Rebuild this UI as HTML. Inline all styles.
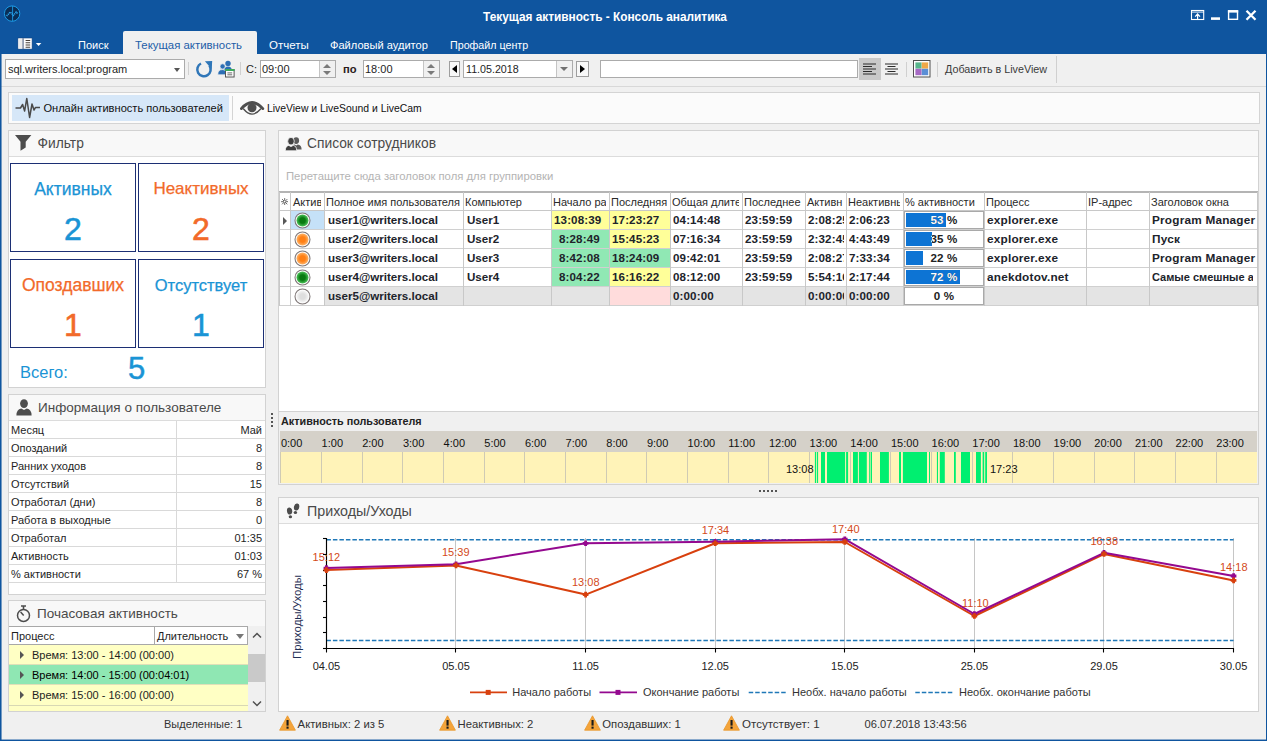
<!DOCTYPE html>
<html lang="ru">
<head>
<meta charset="utf-8">
<title>Текущая активность - Консоль аналитика</title>
<style>
*{box-sizing:border-box;margin:0;padding:0}
html,body{width:1267px;height:741px;overflow:hidden}
body{font-family:"Liberation Sans",sans-serif;font-size:12px;color:#1e1e1e;background:#f0f0f0;position:relative}
.a{position:absolute;white-space:nowrap}
.t{position:absolute;white-space:nowrap;line-height:14px;height:14px}
#win{position:absolute;left:0;top:0;width:1267px;height:741px;background:#f0f0f0;overflow:hidden}
#title{left:0;top:0;width:1267px;height:54px;background:#0f559f}
.tab{color:#fff;font-size:11.4px}
.inp{background:#fff;border:1px solid #ababab}
.panel{background:#fff;border:1px solid #d2d2d2}
.phead{position:absolute;left:0;top:0;right:0;height:26px;background:#f8f8f8;border-bottom:1px solid #dcdcdc}
.ptitle{position:absolute;top:5px;font-size:13.5px;color:#3c3c3c;line-height:16px;white-space:nowrap}
.fb{width:126px;height:89px;border:1px solid #1c2f74;background:#fff}
.fl{width:126px;text-align:center;font-size:17.5px;line-height:22px;-webkit-text-stroke:.25px currentColor}
.fn{width:126px;text-align:center;font-size:32px;line-height:36px;-webkit-text-stroke:.55px currentColor}
.tri{width:0;height:0;border:4px solid transparent;border-left:4.5px solid #555;border-right:0}
.gh{height:18px;line-height:18px;font-size:11px;padding-left:2px;overflow:hidden;white-space:nowrap;color:#2a2a2a}
.gc{height:18px;line-height:18px;font-size:11.6px;font-weight:bold;overflow:hidden;white-space:nowrap;color:#20232b;letter-spacing:.12px}
.gw{font-size:11.6px;letter-spacing:0}
.gw2{font-size:11.8px;letter-spacing:.2px}
.sep{position:absolute;width:1px;background:#d0d0d0}
</style>
</head>
<body>
<div id="win">

<!-- ===== TITLE BAR ===== -->
<div class="a" id="title">
  <svg class="a" style="left:3px;top:4px" width="19" height="19" viewBox="0 0 19 19">
    <circle cx="9.1" cy="9.6" r="7.7" fill="#0a2d55" stroke="#1c9be6" stroke-width="1"/>
    <path d="M9.6 2 V17.2" stroke="#1c9be6" stroke-width="0.9"/>
    <path d="M3.6 12 L7.4 8 L10.4 11.4 L13.2 8 L15 10" fill="none" stroke="#2aa4ee" stroke-width="1.5" stroke-dasharray="1.2 0.7"/>
  </svg>
  <div class="t" style="left:0;width:1210px;top:9.5px;text-align:center;color:#fff;font-weight:bold;font-size:11.85px">Текущая активность - Консоль аналитика</div>
  <!-- window controls -->
  <svg class="a" style="left:1190px;top:9px" width="70" height="13" viewBox="0 0 70 13">
    <rect x="1.5" y="1.5" width="12.2" height="9" fill="none" stroke="#fff" stroke-width="1.1"/>
    <path d="M1.5 3.1 H13.7" stroke="#fff" stroke-width="0.9"/>
    <path d="M7.6 10 V5.4 M5.2 7.6 L7.6 5 L10 7.6" stroke="#fff" stroke-width="1.2" fill="none"/>
    <rect x="21" y="8.3" width="9" height="2.6" fill="#fff"/>
    <rect x="38.6" y="2" width="8.9" height="8.3" fill="none" stroke="#fff" stroke-width="1.4"/>
    <rect x="37.9" y="1.1" width="10.3" height="2.5" fill="#fff"/>
    <path d="M56.5 1.7 L65.5 10.7 M65.5 1.7 L56.5 10.7" stroke="#fff" stroke-width="2.3"/>
  </svg>
  <!-- tab row -->
  <svg class="a" style="left:17px;top:37px" width="26" height="13" viewBox="0 0 26 13">
    <rect x="0.9" y="1" width="14.2" height="11.1" fill="#fdfdfd" stroke="#0c3f7e" stroke-width="0.6"/>
    <rect x="1.6" y="1.8" width="3.8" height="9.6" fill="#ececec"/>
    <rect x="5.6" y="1.3" width="0.9" height="10.6" fill="#2a3f66"/>
    <path d="M8.6 3.5 H13.2 M8.6 5.8 H13.2 M8.6 8 H13.2 M8.6 10.2 H13.2" stroke="#4a4038" stroke-width="1.1"/>
    <path d="M18.8 6 H24.4 L21.6 9 Z" fill="#fff"/>
  </svg>
  <div class="a" style="left:123px;top:31px;width:134px;height:24px;background:#f0f0f0;border-radius:2px 2px 0 0"></div>
  <div class="t tab" style="left:78px;top:38px;font-size:11px">Поиск</div>
  <div class="t tab" style="left:135px;top:38px;color:#1d5ea8">Текущая активность</div>
  <div class="t tab" style="left:269px;top:38px;font-size:11.5px">Отчеты</div>
  <div class="t tab" style="left:330px;top:38px;font-size:11.1px">Файловый аудитор</div>
  <div class="t tab" style="left:450px;top:38px;font-size:10.7px">Профайл центр</div>
</div>

<!-- ===== TOOLBAR 1 ===== -->
<div class="a" id="tb1" style="left:0;top:54px;width:1267px;height:33px;background:#f0f0f0;border-bottom:1px solid #d8d8d8">
  <div class="a inp" style="left:5px;top:5px;width:180px;height:20px"></div>
  <div class="t" style="left:8px;top:8px;font-size:11px">sql.writers.local:program</div>
  <div class="a" style="left:174px;top:14px;border:3.5px solid transparent;border-top:4px solid #555;width:0;height:0"></div>
  <div class="sep" style="left:188px;top:8px;height:13px"></div>
  <!-- refresh -->
  <svg class="a" style="left:195px;top:5px" width="18" height="20" viewBox="0 0 18 20">
    <path d="M6.0 4.5 A6.7 6.7 0 1 0 14.4 6.6" fill="none" stroke="#2f76b8" stroke-width="2.5"/>
    <path d="M9.9 2.3 L17.2 1.9 L16.8 9.2 L13.6 6.4 Z" fill="#2f76b8"/>
  </svg>
  <!-- users icon -->
  <svg class="a" style="left:217px;top:6px" width="19" height="19" viewBox="0 0 19 19">
    <circle cx="11" cy="3.4" r="2.7" fill="#2c6fb5"/>
    <path d="M7.2 11 Q7.2 6.4 11 6.4 Q14.6 6.4 14.8 10 L14.8 11 Z" fill="#2c6fb5"/>
    <circle cx="5.6" cy="6.4" r="2.6" fill="#2c6fb5" stroke="#f0f0f0" stroke-width="0.7"/>
    <path d="M0.8 14.8 Q0.8 9.6 5.4 9.6 Q9.4 9.6 9.4 14.8 Z" fill="#2c6fb5" stroke="#f0f0f0" stroke-width="0.7"/>
    <rect x="8.5" y="9.6" width="8.6" height="7.4" fill="#fff" stroke="#555" stroke-width="1"/>
    <rect x="8" y="9" width="9.6" height="2" fill="#3daa5c"/>
    <path d="M10.4 12.9 H15.2 M10.4 14.8 H15.2" stroke="#444" stroke-width="0.8"/>
  </svg>
  <div class="sep" style="left:240px;top:8px;height:13px"></div>
  <div class="t" style="left:246px;top:8px;font-size:11px">С:</div>
  <div class="a inp" style="left:260px;top:6px;width:76px;height:18px"></div>
  <div class="t" style="left:262px;top:8px;font-size:11px">09:00</div>
  <div class="a" style="left:319px;top:7px;width:16px;height:16px;background:#f0f0f0;border-left:1px solid #c4c4c4"></div>
  <div class="a" style="left:323px;top:9.5px;border:4px solid transparent;border-bottom:4px solid #7a7a7a;border-top:0;width:0;height:0"></div>
  <div class="a" style="left:323px;top:16.5px;border:4px solid transparent;border-top:4px solid #7a7a7a;border-bottom:0;width:0;height:0"></div>
  <div class="t" style="left:343px;top:8px;font-size:11.2px;font-weight:bold;color:#2a1a1a">по</div>
  <div class="a inp" style="left:363px;top:6px;width:77px;height:18px"></div>
  <div class="t" style="left:365px;top:8px;font-size:11px">18:00</div>
  <div class="a" style="left:423px;top:7px;width:16px;height:16px;background:#f0f0f0;border-left:1px solid #c4c4c4"></div>
  <div class="a" style="left:427px;top:9.5px;border:4px solid transparent;border-bottom:4px solid #7a7a7a;border-top:0;width:0;height:0"></div>
  <div class="a" style="left:427px;top:16.5px;border:4px solid transparent;border-top:4px solid #7a7a7a;border-bottom:0;width:0;height:0"></div>
  <!-- date nav -->
  <div class="a" style="left:449px;top:7px;width:11px;height:16px;background:#f8f8f8;border:1px solid #9e9e9e"></div>
  <div class="a" style="left:452px;top:11px;border:4px solid transparent;border-right:5px solid #000;border-left:0;width:0;height:0"></div>
  <div class="a inp" style="left:463px;top:6px;width:110px;height:18px"></div>
  <div class="t" style="left:466px;top:8px;font-size:10.7px">11.05.2018</div>
  <div class="a" style="left:556px;top:7px;width:16px;height:16px;background:#f0f0f0;border-left:1px solid #c4c4c4"></div>
  <div class="a" style="left:560px;top:13px;border:4px solid transparent;border-top:4px solid #707070;border-bottom:0;width:0;height:0"></div>
  <div class="a" style="left:576px;top:7px;width:13px;height:16px;background:#f8f8f8;border:1px solid #9e9e9e"></div>
  <div class="a" style="left:580px;top:11px;border:4px solid transparent;border-left:5px solid #000;border-right:0;width:0;height:0"></div>
  <div class="a inp" style="left:600px;top:6px;width:258px;height:18px"></div>
  <!-- align buttons -->
  <div class="a" style="left:859px;top:4px;width:22px;height:22px;background:#c9c9c9"></div>
  <svg class="a" style="left:863px;top:9px" width="14" height="12" viewBox="0 0 14 12"><path d="M0 1 H13 M0 3.5 H9 M0 6 H13 M0 8.5 H9 M0 11 H13" stroke="#2b2b2b" stroke-width="1.2"/></svg>
  <svg class="a" style="left:885px;top:9px" width="14" height="12" viewBox="0 0 14 12"><path d="M0 1 H13 M2.5 3.5 H10.5 M0 6 H13 M2.5 8.5 H10.5 M0 11 H13" stroke="#2b2b2b" stroke-width="1.2"/></svg>
  <div class="sep" style="left:906px;top:8px;height:15px"></div>
  <svg class="a" style="left:913px;top:6px" width="18" height="18" viewBox="0 0 18 18">
    <rect x="0.5" y="0.5" width="16.5" height="16.5" fill="#fff" stroke="#4f4f4f" stroke-width="1"/>
    <rect x="2.4" y="2.4" width="6.2" height="6.2" fill="#58b58c"/><rect x="8.8" y="2.4" width="6.4" height="6.2" fill="#f0a848"/>
    <rect x="2.4" y="8.8" width="6.2" height="6.4" fill="#a669c4"/><rect x="8.8" y="8.8" width="6.4" height="6.4" fill="#5b8fd6"/>
  </svg>
  <div class="sep" style="left:937px;top:8px;height:15px"></div>
  <div class="t" style="left:945px;top:8px;font-size:10.75px;color:#3a3a3a">Добавить в LiveView</div>
  <div class="sep" style="left:1056px;top:2px;height:27px"></div>
</div>

<!-- ===== TOOLBAR 2 ===== -->
<div class="a" id="tb2" style="left:8px;top:92px;width:1252px;height:32px;background:#fbfbfb;border:1px solid #d4d4d4">
  <div class="a" style="left:3px;top:2px;width:217px;height:26px;background:#d6e7f8"></div>
  <svg class="a" style="left:6px;top:4px" width="26" height="22" viewBox="0 0 26 22">
    <path d="M0.5 11 H5.5 L7.6 7.5 L9.6 14 L11.8 1.5 L14.6 20.5 L17 7 L19 13 L20.4 10.6 H25" fill="none" stroke="#4a4a4a" stroke-width="1.5" stroke-linejoin="round"/>
  </svg>
  <div class="t" style="left:34.4px;top:8px;font-size:11.1px;color:#111">Онлайн активность пользователей</div>
  <div class="sep" style="left:223px;top:3px;height:24px;background:#d4d4d4"></div>
  <svg class="a" style="left:231px;top:8px" width="25" height="15" viewBox="0 0 25 15">
    <path d="M1.4 7.6 Q12 -4.6 22.8 7.6" fill="none" stroke="#4f4f4f" stroke-width="2.8" stroke-linecap="round"/>
    <path d="M3.6 8 Q12 18.2 20.6 8" fill="none" stroke="#4f4f4f" stroke-width="1.4" stroke-linecap="round"/>
    <circle cx="12" cy="6.8" r="4.5" fill="#4f4f4f"/>
  </svg>
  <div class="t" style="left:258px;top:8.5px;font-size:10.4px;color:#111">LiveView и LiveSound и LiveCam</div>
</div>

<!-- ===== FILTER PANEL ===== -->
<div class="a panel" id="pfilter" style="left:8px;top:130px;width:258px;height:258px;background:#fff">
  <div class="phead"></div>
  <svg class="a" style="left:6px;top:4px" width="17" height="16" viewBox="0 0 17 16">
    <path d="M0 0 H16.4 L10.7 6.8 V12.4 L5.5 15.8 V6.8 Z" fill="#4d4d4d"/>
  </svg>
  <div class="ptitle" style="left:28.5px;font-size:13.8px;color:#4a4a4a">Фильтр</div>
  <div class="a fb" style="left:1px;top:32px"></div>
  <div class="a fb" style="left:129px;top:32px"></div>
  <div class="a fb" style="left:1px;top:128px"></div>
  <div class="a fb" style="left:129px;top:128px"></div>
  <div class="a fl" style="left:1px;top:47px;color:#1a94d5">Активных</div>
  <div class="a fn" style="left:1px;top:80px;color:#1a94d5">2</div>
  <div class="a fl" style="left:129px;top:47px;color:#f26a2a;font-size:17px">Неактивных</div>
  <div class="a fn" style="left:129px;top:80px;color:#f26a2a">2</div>
  <div class="a fl" style="left:1px;top:143px;color:#f26a2a">Опоздавших</div>
  <div class="a fn" style="left:1px;top:176px;color:#f26a2a">1</div>
  <div class="a fl" style="left:129px;top:143px;color:#1a94d5;font-size:16.5px">Отсутствует</div>
  <div class="a fn" style="left:129px;top:176px;color:#1a94d5">1</div>
  <div class="a" style="left:11px;top:231px;font-size:16.5px;line-height:20px;color:#1a94d5">Всего:</div>
  <div class="a" style="left:119px;top:220px;font-size:31px;line-height:36px;color:#1a94d5;-webkit-text-stroke:.5px currentColor">5</div>
</div>

<!-- ===== USER INFO PANEL ===== -->
<div class="a panel" id="pinfo" style="left:8px;top:394px;width:258px;height:201px;background:#fff">
  <div class="phead"></div>
  <svg class="a" style="left:7px;top:4px" width="16" height="17" viewBox="0 0 16 17">
    <ellipse cx="8" cy="4.6" rx="3.9" ry="4.4" fill="#4d4d4d"/>
    <path d="M0.4 16.5 Q0.4 10.6 5.2 9.6 L8 11 L10.8 9.6 Q15.6 10.6 15.6 16.5 Z" fill="#4d4d4d"/>
  </svg>
  <div class="ptitle" style="left:29px;font-size:13.5px;color:#4a4a4a">Информация о пользователе</div>
  <div class="a" style="left:167px;top:26px;width:1px;height:162px;background:#d9d9d9"></div>
  <div class="a" style="left:0;top:26px;width:256px;height:18px;border-bottom:1px solid #d9d9d9"></div>
  <div class="t" style="left:2px;top:28px;font-size:11px">Месяц</div>
  <div class="t" style="right:3px;top:28px;font-size:11px">Май</div>
  <div class="a" style="left:0;top:44px;width:256px;height:18px;border-bottom:1px solid #d9d9d9"></div>
  <div class="t" style="left:2px;top:46px;font-size:11px">Опозданий</div>
  <div class="t" style="right:3px;top:46px;font-size:11px">8</div>
  <div class="a" style="left:0;top:62px;width:256px;height:18px;border-bottom:1px solid #d9d9d9"></div>
  <div class="t" style="left:2px;top:64px;font-size:11px">Ранних уходов</div>
  <div class="t" style="right:3px;top:64px;font-size:11px">8</div>
  <div class="a" style="left:0;top:80px;width:256px;height:18px;border-bottom:1px solid #d9d9d9"></div>
  <div class="t" style="left:2px;top:82px;font-size:11px">Отсутствий</div>
  <div class="t" style="right:3px;top:82px;font-size:11px">15</div>
  <div class="a" style="left:0;top:98px;width:256px;height:18px;border-bottom:1px solid #d9d9d9"></div>
  <div class="t" style="left:2px;top:100px;font-size:11px">Отработал (дни)</div>
  <div class="t" style="right:3px;top:100px;font-size:11px">8</div>
  <div class="a" style="left:0;top:116px;width:256px;height:18px;border-bottom:1px solid #d9d9d9"></div>
  <div class="t" style="left:2px;top:118px;font-size:11px">Работа в выходные</div>
  <div class="t" style="right:3px;top:118px;font-size:11px">0</div>
  <div class="a" style="left:0;top:134px;width:256px;height:18px;border-bottom:1px solid #d9d9d9"></div>
  <div class="t" style="left:2px;top:136px;font-size:11px">Отработал</div>
  <div class="t" style="right:3px;top:136px;font-size:11px">01:35</div>
  <div class="a" style="left:0;top:152px;width:256px;height:18px;border-bottom:1px solid #d9d9d9"></div>
  <div class="t" style="left:2px;top:154px;font-size:11px">Активность</div>
  <div class="t" style="right:3px;top:154px;font-size:11px">01:03</div>
  <div class="a" style="left:0;top:170px;width:256px;height:18px;border-bottom:1px solid #d9d9d9"></div>
  <div class="t" style="left:2px;top:172px;font-size:11px">% активности</div>
  <div class="t" style="right:3px;top:172px;font-size:11px">67 %</div>
</div>

<!-- ===== HOURLY PANEL ===== -->
<div class="a panel" id="phour" style="left:8px;top:600px;width:258px;height:112px;background:#fff;overflow:hidden">
  <div class="phead" style="height:25px;border-bottom:0"></div>
  <svg class="a" style="left:7px;top:4px" width="15" height="18" viewBox="0 0 15 18">
    <circle cx="7.5" cy="10.4" r="6" fill="none" stroke="#4d4d4d" stroke-width="1.5"/>
    <path d="M5 1 H10 M7.5 1 V4" fill="none" stroke="#4d4d4d" stroke-width="1.6"/>
    <path d="M4.6 7 L7.7 10.6" fill="none" stroke="#4d4d4d" stroke-width="1.5"/>
  </svg>
  <div class="ptitle" style="left:28px;font-size:13.5px;color:#4a4a4a">Почасовая активность</div>
  <div class="a" style="left:0;top:25px;width:239px;height:19px;background:#fff;border:1px solid #a8a8a8;border-left:0"></div>
  <div class="a" style="left:145px;top:26px;width:1px;height:17px;background:#a8a8a8"></div>
  <div class="t" style="left:2px;top:28px;font-size:11px">Процесс</div>
  <div class="t" style="left:148px;top:28px;font-size:11px">Длительность</div>
  <div class="a" style="left:227px;top:33px;border:4.5px solid transparent;border-top:5px solid #777;border-bottom:0;width:0;height:0"></div>
  <div class="a" style="left:0;top:44px;width:239px;height:20px;background:#ffffc4;border-bottom:1px solid #e0e0b8"></div>
  <div class="a" style="left:0;top:64px;width:239px;height:20px;background:#8fe7b3;border-bottom:1px solid #e0e0b8"></div>
  <div class="a" style="left:0;top:84px;width:239px;height:21px;background:#ffffc4;border-bottom:1px solid #d8d8b4"></div>
  <div class="a" style="left:0;top:105px;width:239px;height:8px;background:#ffffc4"></div>
  <div class="a tri" style="left:11px;top:50px"></div>
  <div class="a tri" style="left:11px;top:70px"></div>
  <div class="a tri" style="left:11px;top:90px"></div>
  <div class="t" style="left:23px;top:47px;font-size:11px">Время: 13:00 - 14:00 (00:00)</div>
  <div class="t" style="left:23px;top:67px;font-size:11px;color:#000">Время: 14:00 - 15:00 (00:04:01)</div>
  <div class="t" style="left:23px;top:87px;font-size:11px">Время: 15:00 - 16:00 (00:00)</div>
  <div class="t" style="left:23px;top:107px;font-size:11px">Время: 16:00 - 17:00 (00:00)</div>
  <div class="a" style="left:239px;top:25px;width:18px;height:86px;background:#f0f0f0"></div>
  <div class="a" style="left:239px;top:53px;width:18px;height:28px;background:#c9c9c9"></div>
  <svg class="a" style="left:243px;top:31px" width="10" height="7" viewBox="0 0 10 7"><path d="M1 5.5 L5 1.5 L9 5.5" fill="none" stroke="#505050" stroke-width="1.5"/></svg>
  <svg class="a" style="left:243px;top:99px" width="10" height="7" viewBox="0 0 10 7"><path d="M1 1.5 L5 5.5 L9 1.5" fill="none" stroke="#505050" stroke-width="1.5"/></svg>
</div>

<!-- ===== EMPLOYEE LIST PANEL ===== -->
<div class="a panel" id="pemp" style="left:278px;top:130px;width:981px;height:282px;background:#fff">
  <div class="phead"></div>
  <svg class="a" style="left:6px;top:6px" width="17" height="14" viewBox="0 0 17 14">
    <ellipse cx="11.2" cy="3.6" rx="2.9" ry="3.4" fill="#5a5a5a"/>
    <path d="M6.6 12.6 Q6.6 8.2 9.6 7.6 L11.2 8.6 L12.8 7.6 Q16.6 8.2 16.6 12.6 Z" fill="#5a5a5a"/>
    <ellipse cx="6" cy="4.2" rx="3.3" ry="3.8" fill="#3f3f3f" stroke="#f8f8f8" stroke-width="0.8"/>
    <path d="M0.3 13.8 Q0.3 9 3.8 8.4 L6 9.6 L8.2 8.4 Q11.7 9 11.7 13.8 Z" fill="#3f3f3f" stroke="#f8f8f8" stroke-width="0.8"/>
  </svg>
  <div class="ptitle" style="left:28px;font-size:13.8px;color:#4a4a4a">Список сотрудников</div>
  <div class="t" style="left:7px;top:38px;font-size:11.3px;color:#b4b4b4">Перетащите сюда заголовок поля для группировки</div>
  <div class="a" style="left:0;top:60px;width:979px;height:2px;background:#b4b4b4"></div>
  <div class="a" style="left:0;top:62px;width:979px;height:18px;background:#fff;border-bottom:1px solid #c8c8c8"></div>
  <div class="a gh" style="left:0px;top:62px;width:8px"></div>
  <div class="a gh" style="left:11px;top:62px;width:31px;padding-left:3px">Актив</div>
  <div class="a gh" style="left:45px;top:62px;width:136px">Полное имя пользователя</div>
  <div class="a gh" style="left:184px;top:62px;width:85px">Компьютер</div>
  <div class="a gh" style="left:272px;top:62px;width:55px">Начало раб</div>
  <div class="a gh" style="left:330px;top:62px;width:58px">Последняя</div>
  <div class="a gh" style="left:391px;top:62px;width:69px">Общая длите</div>
  <div class="a gh" style="left:463px;top:62px;width:60px">Последнее а</div>
  <div class="a gh" style="left:526px;top:62px;width:38px">Активн</div>
  <div class="a gh" style="left:567px;top:62px;width:54px">Неактивнь</div>
  <div class="a gh" style="left:624px;top:62px;width:78px">% активности</div>
  <div class="a gh" style="left:705px;top:62px;width:99px">Процесс</div>
  <div class="a gh" style="left:807px;top:62px;width:60px">IP-адрес</div>
  <div class="a gh" style="left:870px;top:62px;width:105px">Заголовок окна</div>
  <svg class="a" style="left:2px;top:67px" width="7.4" height="7.4" viewBox="0 0 9 9"><g stroke="#3a3a3a" stroke-width="0.95" stroke-linecap="round"><path d="M4.5 0.6 V8.4 M0.6 4.5 H8.4 M1.7 1.7 L7.3 7.3 M7.3 1.7 L1.7 7.3"/></g><circle cx="4.5" cy="4.5" r="1" fill="#fff"/></svg>
  <div class="a" style="left:11px;top:80px;width:35px;height:18px;background:#c5e1f8"></div>
  <div class="a tri" style="left:4px;top:86px;border-left-color:#585858"></div>
  <div class="a" style="left:273px;top:80px;width:57px;height:18px;background:#ffff99"></div>
  <div class="a" style="left:331px;top:80px;width:60px;height:18px;background:#ffff99"></div>
  <div class="a" style="left:0;top:98px;width:979px;height:1px;background:#d0d0d0"></div>
  <svg class="a" style="left:14.5px;top:80.5px" width="17" height="17" viewBox="0 0 17 17"><defs><radialGradient id="g0" cx="0.5" cy="0.5" r="0.5"><stop offset="0.45" stop-color="#087a10"/><stop offset="1" stop-color="#4cc45a"/></radialGradient></defs><circle cx="8.5" cy="8.5" r="7.5" fill="#fcfcfc" stroke="#7e7676" stroke-width="1.05"/><circle cx="8.5" cy="8.5" r="6" fill="url(#g0)"/></svg>
  <div class="a gc gw" style="left:49px;top:80px;width:133px">user1@writers.local</div>
  <div class="a gc gw" style="left:188px;top:80px;width:82px">User1</div>
  <div class="a gc" style="left:275px;top:80px;width:53px">13:08:39</div>
  <div class="a gc" style="left:333px;top:80px;width:56px">17:23:27</div>
  <div class="a gc" style="left:394px;top:80px;width:67px">04:14:48</div>
  <div class="a gc" style="left:466px;top:80px;width:58px">23:59:59</div>
  <div class="a gc" style="left:529px;top:80px;width:36px">2:08:25</div>
  <div class="a gc" style="left:570px;top:80px;width:52px">2:06:23</div>
  <div class="a" style="left:625px;top:80px;width:80px;height:18px;background:#fff;border:1px solid #a9a9a9"></div>
  <div class="a" style="left:627px;top:82px;width:40px;height:14px;background:#0d74d4"></div>
  <div class="a gc" style="left:625px;top:80px;width:80px;text-align:center;color:#222">53 %</div>
  <div class="a" style="left:627px;top:80px;width:40px;height:18px;overflow:hidden"><div class="a gc" style="left:-2px;top:0;width:80px;text-align:center;color:#fff">53 %</div></div>
  <div class="a gc gw2" style="left:708px;top:80px;width:97px">explorer.exe</div>
  <div class="a gc gw2" style="left:873px;top:80px;width:103px;width:104px">Program Manager</div>
  <div class="a" style="left:273px;top:99px;width:57px;height:18px;background:#90e8b4"></div>
  <div class="a" style="left:331px;top:99px;width:60px;height:18px;background:#ffff99"></div>
  <div class="a" style="left:0;top:117px;width:979px;height:1px;background:#d0d0d0"></div>
  <svg class="a" style="left:14.5px;top:99.5px" width="17" height="17" viewBox="0 0 17 17"><defs><radialGradient id="g1" cx="0.5" cy="0.5" r="0.5"><stop offset="0.45" stop-color="#ff7f14"/><stop offset="1" stop-color="#ffb468"/></radialGradient></defs><circle cx="8.5" cy="8.5" r="7.5" fill="#fcfcfc" stroke="#7e7676" stroke-width="1.05"/><circle cx="8.5" cy="8.5" r="6" fill="url(#g1)"/></svg>
  <div class="a gc gw" style="left:49px;top:99px;width:133px">user2@writers.local</div>
  <div class="a gc gw" style="left:188px;top:99px;width:82px">User2</div>
  <div class="a gc" style="left:280px;top:99px;width:48px">8:28:49</div>
  <div class="a gc" style="left:333px;top:99px;width:56px">15:45:23</div>
  <div class="a gc" style="left:394px;top:99px;width:67px">07:16:34</div>
  <div class="a gc" style="left:466px;top:99px;width:58px">23:59:59</div>
  <div class="a gc" style="left:529px;top:99px;width:36px">2:32:45</div>
  <div class="a gc" style="left:570px;top:99px;width:52px">4:43:49</div>
  <div class="a" style="left:625px;top:99px;width:80px;height:18px;background:#fff;border:1px solid #a9a9a9"></div>
  <div class="a" style="left:627px;top:101px;width:26px;height:14px;background:#0d74d4"></div>
  <div class="a gc" style="left:625px;top:99px;width:80px;text-align:center;color:#222">35 %</div>
  <div class="a" style="left:627px;top:99px;width:26px;height:18px;overflow:hidden"><div class="a gc" style="left:-2px;top:0;width:80px;text-align:center;color:#fff">35 %</div></div>
  <div class="a gc gw2" style="left:708px;top:99px;width:97px">explorer.exe</div>
  <div class="a gc gw2" style="left:873px;top:99px;width:103px;width:104px">Пуск</div>
  <div class="a" style="left:273px;top:118px;width:57px;height:18px;background:#90e8b4"></div>
  <div class="a" style="left:331px;top:118px;width:60px;height:18px;background:#90e8b4"></div>
  <div class="a" style="left:0;top:136px;width:979px;height:1px;background:#d0d0d0"></div>
  <svg class="a" style="left:14.5px;top:118.5px" width="17" height="17" viewBox="0 0 17 17"><defs><radialGradient id="g2" cx="0.5" cy="0.5" r="0.5"><stop offset="0.45" stop-color="#ff7f14"/><stop offset="1" stop-color="#ffb468"/></radialGradient></defs><circle cx="8.5" cy="8.5" r="7.5" fill="#fcfcfc" stroke="#7e7676" stroke-width="1.05"/><circle cx="8.5" cy="8.5" r="6" fill="url(#g2)"/></svg>
  <div class="a gc gw" style="left:49px;top:118px;width:133px">user3@writers.local</div>
  <div class="a gc gw" style="left:188px;top:118px;width:82px">User3</div>
  <div class="a gc" style="left:280px;top:118px;width:48px">8:42:08</div>
  <div class="a gc" style="left:333px;top:118px;width:56px">18:24:09</div>
  <div class="a gc" style="left:394px;top:118px;width:67px">09:42:01</div>
  <div class="a gc" style="left:466px;top:118px;width:58px">23:59:59</div>
  <div class="a gc" style="left:529px;top:118px;width:36px">2:08:27</div>
  <div class="a gc" style="left:570px;top:118px;width:52px">7:33:34</div>
  <div class="a" style="left:625px;top:118px;width:80px;height:18px;background:#fff;border:1px solid #a9a9a9"></div>
  <div class="a" style="left:627px;top:120px;width:17px;height:14px;background:#0d74d4"></div>
  <div class="a gc" style="left:625px;top:118px;width:80px;text-align:center;color:#222">22 %</div>
  <div class="a" style="left:627px;top:118px;width:17px;height:18px;overflow:hidden"><div class="a gc" style="left:-2px;top:0;width:80px;text-align:center;color:#fff">22 %</div></div>
  <div class="a gc gw2" style="left:708px;top:118px;width:97px">explorer.exe</div>
  <div class="a gc gw2" style="left:873px;top:118px;width:103px;width:104px">Program Manager</div>
  <div class="a" style="left:273px;top:137px;width:57px;height:18px;background:#90e8b4"></div>
  <div class="a" style="left:331px;top:137px;width:60px;height:18px;background:#ffff99"></div>
  <div class="a" style="left:0;top:155px;width:979px;height:1px;background:#d0d0d0"></div>
  <svg class="a" style="left:14.5px;top:137.5px" width="17" height="17" viewBox="0 0 17 17"><defs><radialGradient id="g3" cx="0.5" cy="0.5" r="0.5"><stop offset="0.45" stop-color="#087a10"/><stop offset="1" stop-color="#4cc45a"/></radialGradient></defs><circle cx="8.5" cy="8.5" r="7.5" fill="#fcfcfc" stroke="#7e7676" stroke-width="1.05"/><circle cx="8.5" cy="8.5" r="6" fill="url(#g3)"/></svg>
  <div class="a gc gw" style="left:49px;top:137px;width:133px">user4@writers.local</div>
  <div class="a gc gw" style="left:188px;top:137px;width:82px">User4</div>
  <div class="a gc" style="left:280px;top:137px;width:48px">8:04:22</div>
  <div class="a gc" style="left:333px;top:137px;width:56px">16:16:22</div>
  <div class="a gc" style="left:394px;top:137px;width:67px">08:12:00</div>
  <div class="a gc" style="left:466px;top:137px;width:58px">23:59:59</div>
  <div class="a gc" style="left:529px;top:137px;width:36px">5:54:16</div>
  <div class="a gc" style="left:570px;top:137px;width:52px">2:17:44</div>
  <div class="a" style="left:625px;top:137px;width:80px;height:18px;background:#fff;border:1px solid #a9a9a9"></div>
  <div class="a" style="left:627px;top:139px;width:54px;height:14px;background:#0d74d4"></div>
  <div class="a gc" style="left:625px;top:137px;width:80px;text-align:center;color:#222">72 %</div>
  <div class="a" style="left:627px;top:137px;width:54px;height:18px;overflow:hidden"><div class="a gc" style="left:-2px;top:0;width:80px;text-align:center;color:#fff">72 %</div></div>
  <div class="a gc gw2" style="left:708px;top:137px;width:97px">anekdotov.net</div>
  <div class="a gc gw2" style="left:873px;top:137px;width:103px;width:101px;font-size:11px;letter-spacing:0">Самые смешные анекдоты</div>
  <div class="a" style="left:45px;top:156px;width:933px;height:19px;background:#e4e4e4"></div>
  <div class="a" style="left:331px;top:156px;width:60px;height:18px;background:#ffdcdc"></div>
  <div class="a" style="left:0;top:174px;width:979px;height:1px;background:#d0d0d0"></div>
  <svg class="a" style="left:14.5px;top:156.5px" width="17" height="17" viewBox="0 0 17 17"><defs><radialGradient id="g4" cx="0.5" cy="0.5" r="0.5"><stop offset="0.45" stop-color="#dedede"/><stop offset="1" stop-color="#f6f6f6"/></radialGradient></defs><circle cx="8.5" cy="8.5" r="7.5" fill="#fcfcfc" stroke="#7e7676" stroke-width="1.05"/><circle cx="8.5" cy="8.5" r="6" fill="url(#g4)"/></svg>
  <div class="a gc gw" style="left:49px;top:156px;width:133px">user5@writers.local</div>
  <div class="a gc" style="left:394px;top:156px;width:67px">0:00:00</div>
  <div class="a gc" style="left:529px;top:156px;width:36px">0:00:00</div>
  <div class="a gc" style="left:570px;top:156px;width:52px">0:00:00</div>
  <div class="a" style="left:625px;top:156px;width:80px;height:18px;background:#fff;border:1px solid #a9a9a9"></div>
  <div class="a gc" style="left:625px;top:156px;width:80px;text-align:center;color:#222">0 %</div>
  <div class="a" style="left:0px;top:61px;width:1px;height:114px;background:#c8c8c8"></div>
  <div class="a" style="left:11px;top:61px;width:1px;height:114px;background:#c8c8c8"></div>
  <div class="a" style="left:45px;top:61px;width:1px;height:114px;background:#c8c8c8"></div>
  <div class="a" style="left:184px;top:61px;width:1px;height:114px;background:#c8c8c8"></div>
  <div class="a" style="left:272px;top:61px;width:1px;height:114px;background:#c8c8c8"></div>
  <div class="a" style="left:330px;top:61px;width:1px;height:114px;background:#c8c8c8"></div>
  <div class="a" style="left:391px;top:61px;width:1px;height:114px;background:#c8c8c8"></div>
  <div class="a" style="left:463px;top:61px;width:1px;height:114px;background:#c8c8c8"></div>
  <div class="a" style="left:526px;top:61px;width:1px;height:114px;background:#c8c8c8"></div>
  <div class="a" style="left:567px;top:61px;width:1px;height:114px;background:#c8c8c8"></div>
  <div class="a" style="left:624px;top:61px;width:1px;height:114px;background:#c8c8c8"></div>
  <div class="a" style="left:705px;top:61px;width:1px;height:114px;background:#c8c8c8"></div>
  <div class="a" style="left:807px;top:61px;width:1px;height:114px;background:#c8c8c8"></div>
  <div class="a" style="left:870px;top:61px;width:1px;height:114px;background:#c8c8c8"></div>
  <div class="a" style="left:978px;top:61px;width:1px;height:114px;background:#c8c8c8"></div>
</div>


<!-- ===== ACTIVITY TIMELINE ===== -->
<div class="a" style="left:278px;top:411px;width:981px;height:74px;border:1px solid #d2d2d2;background:#f0f0f0"></div>
<div class="t" style="left:281px;top:414px;font-size:10.8px;font-weight:bold;color:#222">Активность пользователя</div>
<svg class="a" style="left:270px;top:412px" width="4" height="18" viewBox="0 0 4 18"><g fill="#555"><rect x="1" y="1" width="2" height="2"/><rect x="1" y="5" width="2" height="2"/><rect x="1" y="9" width="2" height="2"/><rect x="1" y="13" width="2" height="2"/></g></svg>
<div class="a" id="tl" style="left:280px;top:431px;width:977px;height:52px;background:#fff3b8;overflow:hidden">
  <div class="a" style="left:0;top:0;width:977px;height:21px;background:#d5d1c9"></div>
  <div class="a" style="left:0.3px;top:21px;width:1px;height:31px;background:#cfcab4"></div>
  <div class="t" style="left:0.9px;top:5px;font-size:11px;color:#111">0:00</div>
  <div class="a" style="left:41.0px;top:21px;width:1px;height:31px;background:#cfcab4"></div>
  <div class="t" style="left:41.6px;top:5px;font-size:11px;color:#111">1:00</div>
  <div class="a" style="left:81.6px;top:21px;width:1px;height:31px;background:#cfcab4"></div>
  <div class="t" style="left:82.2px;top:5px;font-size:11px;color:#111">2:00</div>
  <div class="a" style="left:122.3px;top:21px;width:1px;height:31px;background:#cfcab4"></div>
  <div class="t" style="left:122.9px;top:5px;font-size:11px;color:#111">3:00</div>
  <div class="a" style="left:163.0px;top:21px;width:1px;height:31px;background:#cfcab4"></div>
  <div class="t" style="left:163.6px;top:5px;font-size:11px;color:#111">4:00</div>
  <div class="a" style="left:203.7px;top:21px;width:1px;height:31px;background:#cfcab4"></div>
  <div class="t" style="left:204.3px;top:5px;font-size:11px;color:#111">5:00</div>
  <div class="a" style="left:244.3px;top:21px;width:1px;height:31px;background:#cfcab4"></div>
  <div class="t" style="left:244.9px;top:5px;font-size:11px;color:#111">6:00</div>
  <div class="a" style="left:285.0px;top:21px;width:1px;height:31px;background:#cfcab4"></div>
  <div class="t" style="left:285.6px;top:5px;font-size:11px;color:#111">7:00</div>
  <div class="a" style="left:325.7px;top:21px;width:1px;height:31px;background:#cfcab4"></div>
  <div class="t" style="left:326.3px;top:5px;font-size:11px;color:#111">8:00</div>
  <div class="a" style="left:366.3px;top:21px;width:1px;height:31px;background:#cfcab4"></div>
  <div class="t" style="left:366.9px;top:5px;font-size:11px;color:#111">9:00</div>
  <div class="a" style="left:407.0px;top:21px;width:1px;height:31px;background:#cfcab4"></div>
  <div class="t" style="left:407.6px;top:5px;font-size:11px;color:#111">10:00</div>
  <div class="a" style="left:447.7px;top:21px;width:1px;height:31px;background:#cfcab4"></div>
  <div class="t" style="left:448.3px;top:5px;font-size:11px;color:#111">11:00</div>
  <div class="a" style="left:488.3px;top:21px;width:1px;height:31px;background:#cfcab4"></div>
  <div class="t" style="left:488.9px;top:5px;font-size:11px;color:#111">12:00</div>
  <div class="a" style="left:529.0px;top:21px;width:1px;height:31px;background:#cfcab4"></div>
  <div class="t" style="left:529.6px;top:5px;font-size:11px;color:#111">13:00</div>
  <div class="a" style="left:569.7px;top:21px;width:1px;height:31px;background:#cfcab4"></div>
  <div class="t" style="left:570.3px;top:5px;font-size:11px;color:#111">14:00</div>
  <div class="a" style="left:610.4px;top:21px;width:1px;height:31px;background:#cfcab4"></div>
  <div class="t" style="left:611.0px;top:5px;font-size:11px;color:#111">15:00</div>
  <div class="a" style="left:651.0px;top:21px;width:1px;height:31px;background:#cfcab4"></div>
  <div class="t" style="left:651.6px;top:5px;font-size:11px;color:#111">16:00</div>
  <div class="a" style="left:691.7px;top:21px;width:1px;height:31px;background:#cfcab4"></div>
  <div class="t" style="left:692.3px;top:5px;font-size:11px;color:#111">17:00</div>
  <div class="a" style="left:732.4px;top:21px;width:1px;height:31px;background:#cfcab4"></div>
  <div class="t" style="left:733.0px;top:5px;font-size:11px;color:#111">18:00</div>
  <div class="a" style="left:773.0px;top:21px;width:1px;height:31px;background:#cfcab4"></div>
  <div class="t" style="left:773.6px;top:5px;font-size:11px;color:#111">19:00</div>
  <div class="a" style="left:813.7px;top:21px;width:1px;height:31px;background:#cfcab4"></div>
  <div class="t" style="left:814.3px;top:5px;font-size:11px;color:#111">20:00</div>
  <div class="a" style="left:854.4px;top:21px;width:1px;height:31px;background:#cfcab4"></div>
  <div class="t" style="left:855.0px;top:5px;font-size:11px;color:#111">21:00</div>
  <div class="a" style="left:895.0px;top:21px;width:1px;height:31px;background:#cfcab4"></div>
  <div class="t" style="left:895.6px;top:5px;font-size:11px;color:#111">22:00</div>
  <div class="a" style="left:935.7px;top:21px;width:1px;height:31px;background:#cfcab4"></div>
  <div class="t" style="left:936.3px;top:5px;font-size:11px;color:#111">23:00</div>
  <svg class="a" style="left:0;top:21px" width="977" height="32" viewBox="0 0 977 32" shape-rendering="auto"><g fill="#00ef70">
    <rect x="534.9" y="0" width="1.2" height="32"/>
    <rect x="536.9" y="0" width="1.2" height="32"/>
    <rect x="541.0" y="0" width="4.0" height="32"/>
    <rect x="547.0" y="0" width="18.1" height="32"/>
    <rect x="566.1" y="0" width="2.0" height="32"/>
    <rect x="573.0" y="0" width="4.9" height="32"/>
    <rect x="578.9" y="0" width="7.9" height="32"/>
    <rect x="589.2" y="0" width="1.2" height="32"/>
    <rect x="591.0" y="0" width="1.0" height="32"/>
    <rect x="600.0" y="0" width="8.9" height="32"/>
    <rect x="619.0" y="0" width="2.0" height="32"/>
    <rect x="622.9" y="0" width="24.1" height="32"/>
    <rect x="649.0" y="0" width="1.0" height="32"/>
    <rect x="656.9" y="0" width="1.1" height="32"/>
    <rect x="659.8" y="0" width="5.0" height="32"/>
    <rect x="674.0" y="0" width="1.8" height="32"/>
    <rect x="681.0" y="0" width="9.0" height="32"/>
    <rect x="696.0" y="0" width="4.9" height="32"/>
    <rect x="702.6" y="0" width="1.6" height="32"/>
    <rect x="705.2" y="0" width="1.8" height="32"/>
  </g></svg>
  <div class="t" style="left:506px;top:31px;font-size:11px;color:#111">13:08</div>
  <div class="t" style="left:710px;top:31px;font-size:11px;color:#111">17:23</div>
</div>
<svg class="a" style="left:758px;top:489px" width="20" height="4" viewBox="0 0 20 4"><g fill="#555"><rect x="1" y="1" width="2" height="2"/><rect x="5" y="1" width="2" height="2"/><rect x="9" y="1" width="2" height="2"/><rect x="13" y="1" width="2" height="2"/><rect x="17" y="1" width="2" height="2"/></g></svg>
<!-- ===== CHART PANEL ===== -->
<div class="a panel" id="pchart" style="left:278px;top:497px;width:981px;height:215px;background:#fff">
  <div class="phead"></div>
  <svg class="a" style="left:7px;top:5px" width="15" height="16" viewBox="0 0 15 16">
    <g fill="#4d4d4d"><ellipse cx="10.6" cy="4" rx="2.6" ry="3.6" transform="rotate(14 10.6 4)"/><ellipse cx="9.4" cy="9.6" rx="1.7" ry="1.5"/>
    <ellipse cx="3.6" cy="8" rx="2.6" ry="3.6" transform="rotate(-10 3.6 8)"/><ellipse cx="4.4" cy="13.8" rx="1.7" ry="1.5"/></g>
  </svg>
  <div class="ptitle" style="left:28px;font-size:14.25px;color:#4a4a4a">Приходы/Уходы</div>
  <svg class="a" style="left:0;top:25px" width="979" height="188" viewBox="0 25 979 188">
    <path d="M176.5 40.0 V150.0" stroke="#c6c6c6" stroke-width="1"/>
    <path d="M306.5 40.0 V150.0" stroke="#c6c6c6" stroke-width="1"/>
    <path d="M436.5 40.0 V150.0" stroke="#c6c6c6" stroke-width="1"/>
    <path d="M565.5 40.0 V150.0" stroke="#c6c6c6" stroke-width="1"/>
    <path d="M695.5 40.0 V150.0" stroke="#c6c6c6" stroke-width="1"/>
    <path d="M824.5 40.0 V150.0" stroke="#c6c6c6" stroke-width="1"/>
    <path d="M954.5 40.0 V150.0" stroke="#c6c6c6" stroke-width="1"/>
    <path d="M47.4 41.7 H954.6" stroke="#1f78b8" stroke-width="1.5" stroke-dasharray="4.5 2"/>
    <path d="M47.4 142.4 H954.6" stroke="#1f78b8" stroke-width="1.5" stroke-dasharray="4.5 2"/>
    <path d="M47.5 40.0 V150.5 H955.0" fill="none" stroke="#000" stroke-width="1.15"/>
    <path d="M44.0 40.5 H47.4" stroke="#000" stroke-width="1.1"/>
    <path d="M44.0 56.5 H47.4" stroke="#000" stroke-width="1.1"/>
    <path d="M44.0 72.5 H47.4" stroke="#000" stroke-width="1.1"/>
    <path d="M44.0 87.5 H47.4" stroke="#000" stroke-width="1.1"/>
    <path d="M44.0 103.5 H47.4" stroke="#000" stroke-width="1.1"/>
    <path d="M44.0 119.5 H47.4" stroke="#000" stroke-width="1.1"/>
    <path d="M44.0 134.5 H47.4" stroke="#000" stroke-width="1.1"/>
    <path d="M44.0 150.5 H47.4" stroke="#000" stroke-width="1.1"/>
    <path d="M47.5 150.0 V154.5" stroke="#000" stroke-width="1.1"/>
    <path d="M176.5 150.0 V154.5" stroke="#000" stroke-width="1.1"/>
    <path d="M306.5 150.0 V154.5" stroke="#000" stroke-width="1.1"/>
    <path d="M436.5 150.0 V154.5" stroke="#000" stroke-width="1.1"/>
    <path d="M565.5 150.0 V154.5" stroke="#000" stroke-width="1.1"/>
    <path d="M695.5 150.0 V154.5" stroke="#000" stroke-width="1.1"/>
    <path d="M824.5 150.0 V154.5" stroke="#000" stroke-width="1.1"/>
    <path d="M954.5 150.0 V154.5" stroke="#000" stroke-width="1.1"/>
    <polyline points="47.4,72.1 177.0,67.4 306.6,96.6 436.2,45.3 565.8,44.0 695.4,118.0 825.0,56.0 954.6,82.4" fill="none" stroke="#d8400e" stroke-width="2" stroke-linejoin="round"/>
    <polyline points="47.4,70.1 177.0,66.2 306.6,45.3 436.2,43.7 565.8,41.2 695.4,116.0 825.0,54.8 954.6,78.0" fill="none" stroke="#94098f" stroke-width="2" stroke-linejoin="round"/>
    <path d="M44.6 68.7 h1.4 v-1.4 h2.8 v1.4 h1.4 v2.8 h-1.4 v1.4 h-2.8 v-1.4 h-1.4 Z" fill="#94098f"/>
    <path d="M174.2 64.8 h1.4 v-1.4 h2.8 v1.4 h1.4 v2.8 h-1.4 v1.4 h-2.8 v-1.4 h-1.4 Z" fill="#94098f"/>
    <path d="M303.8 43.9 h1.4 v-1.4 h2.8 v1.4 h1.4 v2.8 h-1.4 v1.4 h-2.8 v-1.4 h-1.4 Z" fill="#94098f"/>
    <path d="M433.4 42.3 h1.4 v-1.4 h2.8 v1.4 h1.4 v2.8 h-1.4 v1.4 h-2.8 v-1.4 h-1.4 Z" fill="#94098f"/>
    <path d="M563.0 39.8 h1.4 v-1.4 h2.8 v1.4 h1.4 v2.8 h-1.4 v1.4 h-2.8 v-1.4 h-1.4 Z" fill="#94098f"/>
    <path d="M692.6 114.6 h1.4 v-1.4 h2.8 v1.4 h1.4 v2.8 h-1.4 v1.4 h-2.8 v-1.4 h-1.4 Z" fill="#94098f"/>
    <path d="M822.2 53.4 h1.4 v-1.4 h2.8 v1.4 h1.4 v2.8 h-1.4 v1.4 h-2.8 v-1.4 h-1.4 Z" fill="#94098f"/>
    <path d="M951.8 76.6 h1.4 v-1.4 h2.8 v1.4 h1.4 v2.8 h-1.4 v1.4 h-2.8 v-1.4 h-1.4 Z" fill="#94098f"/>
    <path d="M44.6 70.7 h1.4 v-1.4 h2.8 v1.4 h1.4 v2.8 h-1.4 v1.4 h-2.8 v-1.4 h-1.4 Z" fill="#d8400e"/>
    <path d="M174.2 66.0 h1.4 v-1.4 h2.8 v1.4 h1.4 v2.8 h-1.4 v1.4 h-2.8 v-1.4 h-1.4 Z" fill="#d8400e"/>
    <path d="M303.8 95.2 h1.4 v-1.4 h2.8 v1.4 h1.4 v2.8 h-1.4 v1.4 h-2.8 v-1.4 h-1.4 Z" fill="#d8400e"/>
    <path d="M433.4 43.9 h1.4 v-1.4 h2.8 v1.4 h1.4 v2.8 h-1.4 v1.4 h-2.8 v-1.4 h-1.4 Z" fill="#d8400e"/>
    <path d="M563.0 42.6 h1.4 v-1.4 h2.8 v1.4 h1.4 v2.8 h-1.4 v1.4 h-2.8 v-1.4 h-1.4 Z" fill="#d8400e"/>
    <path d="M692.6 116.6 h1.4 v-1.4 h2.8 v1.4 h1.4 v2.8 h-1.4 v1.4 h-2.8 v-1.4 h-1.4 Z" fill="#d8400e"/>
    <path d="M822.2 54.6 h1.4 v-1.4 h2.8 v1.4 h1.4 v2.8 h-1.4 v1.4 h-2.8 v-1.4 h-1.4 Z" fill="#d8400e"/>
    <path d="M951.8 81.0 h1.4 v-1.4 h2.8 v1.4 h1.4 v2.8 h-1.4 v1.4 h-2.8 v-1.4 h-1.4 Z" fill="#d8400e"/>
    <path d="M191.0 194.4 H228.0" stroke="#d8400e" stroke-width="1.7"/>
    <rect x="206.7" y="191.9" width="5" height="5" fill="#d8400e"/>
    <path d="M320.5 194.4 H358.0" stroke="#94098f" stroke-width="1.7"/>
    <rect x="336.5" y="191.9" width="5" height="5" fill="#94098f"/>
    <path d="M469.7 194.4 H508.2" stroke="#1f78b8" stroke-width="1.5" stroke-dasharray="4.5 2"/>
    <path d="M636.3 194.4 H675.0" stroke="#1f78b8" stroke-width="1.5" stroke-dasharray="4.5 2"/>
  </svg>
  <div class="t" style="left:33.6px;top:52.0px;font-size:11px;color:#d34a1a">15:12</div>
  <div class="t" style="left:163.0px;top:47.4px;font-size:11px;color:#d34a1a">15:39</div>
  <div class="t" style="left:293.0px;top:76.6px;font-size:11px;color:#d34a1a">13:08</div>
  <div class="t" style="left:422.7px;top:25.3px;font-size:11px;color:#d34a1a">17:34</div>
  <div class="t" style="left:553.0px;top:24.2px;font-size:11px;color:#d34a1a">17:40</div>
  <div class="t" style="left:683.0px;top:98.2px;font-size:11px;color:#d34a1a">11:10</div>
  <div class="t" style="left:811.5px;top:36.2px;font-size:11px;color:#d34a1a">16:38</div>
  <div class="t" style="left:941.0px;top:61.8px;font-size:11px;color:#d34a1a">14:18</div>
  <div class="t" style="left:27.4px;width:40px;text-align:center;top:160.6px;font-size:11px;color:#222">04.05</div>
  <div class="t" style="left:157.0px;width:40px;text-align:center;top:160.6px;font-size:11px;color:#222">05.05</div>
  <div class="t" style="left:286.6px;width:40px;text-align:center;top:160.6px;font-size:11px;color:#222">11.05</div>
  <div class="t" style="left:416.2px;width:40px;text-align:center;top:160.6px;font-size:11px;color:#222">12.05</div>
  <div class="t" style="left:545.8px;width:40px;text-align:center;top:160.6px;font-size:11px;color:#222">15.05</div>
  <div class="t" style="left:675.4px;width:40px;text-align:center;top:160.6px;font-size:11px;color:#222">25.05</div>
  <div class="t" style="left:805.0px;width:40px;text-align:center;top:160.6px;font-size:11px;color:#222">29.05</div>
  <div class="t" style="left:934.6px;width:40px;text-align:center;top:160.6px;font-size:11px;color:#222">30.05</div>
  <div class="t" style="left:-32.2px;width:100px;text-align:center;top:112.0px;font-size:11.4px;color:#1f2f55;transform:rotate(-90deg)">Приходы/Уходы</div>
  <div class="t" style="left:233.3px;top:187.4px;font-size:11px;color:#333">Начало работы</div>
  <div class="t" style="left:364.0px;top:187.4px;font-size:11px;color:#333">Окончание работы</div>
  <div class="t" style="left:513.0px;top:187.4px;font-size:11px;color:#333">Необх. начало работы</div>
  <div class="t" style="left:680.0px;top:187.4px;font-size:11px;color:#333">Необх. окончание работы</div>
</div>
<!-- ===== STATUS BAR ===== -->
<div class="t" style="left:164px;top:717px;font-size:11px;color:#333">Выделенные: 1</div>
<svg class="a" style="left:278.5px;top:715px" width="17" height="16" viewBox="0 0 17 16"><path d="M8.5 0.8 L16.4 15.2 H0.6 Z" fill="#f4a43a" stroke="#e8952a" stroke-width="0.8" stroke-linejoin="round"/><rect x="7.5" y="5" width="2.1" height="5.6" fill="#1a1a1a"/><rect x="7.5" y="11.6" width="2.1" height="2.1" fill="#1a1a1a"/></svg>
<div class="t" style="left:297.6px;top:717px;font-size:11.3px;color:#333">Активных: 2 из 5</div>
<svg class="a" style="left:438.5px;top:715px" width="17" height="16" viewBox="0 0 17 16"><path d="M8.5 0.8 L16.4 15.2 H0.6 Z" fill="#f4a43a" stroke="#e8952a" stroke-width="0.8" stroke-linejoin="round"/><rect x="7.5" y="5" width="2.1" height="5.6" fill="#1a1a1a"/><rect x="7.5" y="11.6" width="2.1" height="2.1" fill="#1a1a1a"/></svg>
<div class="t" style="left:457.5px;top:717px;font-size:11.3px;color:#333">Неактивных: 2</div>
<svg class="a" style="left:583.5px;top:715px" width="17" height="16" viewBox="0 0 17 16"><path d="M8.5 0.8 L16.4 15.2 H0.6 Z" fill="#f4a43a" stroke="#e8952a" stroke-width="0.8" stroke-linejoin="round"/><rect x="7.5" y="5" width="2.1" height="5.6" fill="#1a1a1a"/><rect x="7.5" y="11.6" width="2.1" height="2.1" fill="#1a1a1a"/></svg>
<div class="t" style="left:602.3px;top:717px;font-size:11.3px;color:#333">Опоздавших: 1</div>
<svg class="a" style="left:722.5px;top:715px" width="17" height="16" viewBox="0 0 17 16"><path d="M8.5 0.8 L16.4 15.2 H0.6 Z" fill="#f4a43a" stroke="#e8952a" stroke-width="0.8" stroke-linejoin="round"/><rect x="7.5" y="5" width="2.1" height="5.6" fill="#1a1a1a"/><rect x="7.5" y="11.6" width="2.1" height="2.1" fill="#1a1a1a"/></svg>
<div class="t" style="left:742px;top:717px;font-size:11.55px;color:#333">Отсутствует: 1</div>
<div class="t" style="left:864.5px;top:717px;font-size:11.15px;color:#333">06.07.2018 13:43:56</div>
<div class="a" style="left:0;top:54px;width:1px;height:687px;background:#0f559f"></div>
<div class="a" style="left:1px;top:54px;width:1px;height:687px;background:#0f559f;opacity:.55"></div>
<div class="a" style="left:1266px;top:54px;width:1px;height:687px;background:#0f559f"></div>
<div class="a" style="left:0;top:740px;width:1267px;height:1px;background:#0f559f"></div>
<div class="a" style="left:0;top:739px;width:1267px;height:1px;background:#0f559f;opacity:.45"></div>


</div>
</body>
</html>
